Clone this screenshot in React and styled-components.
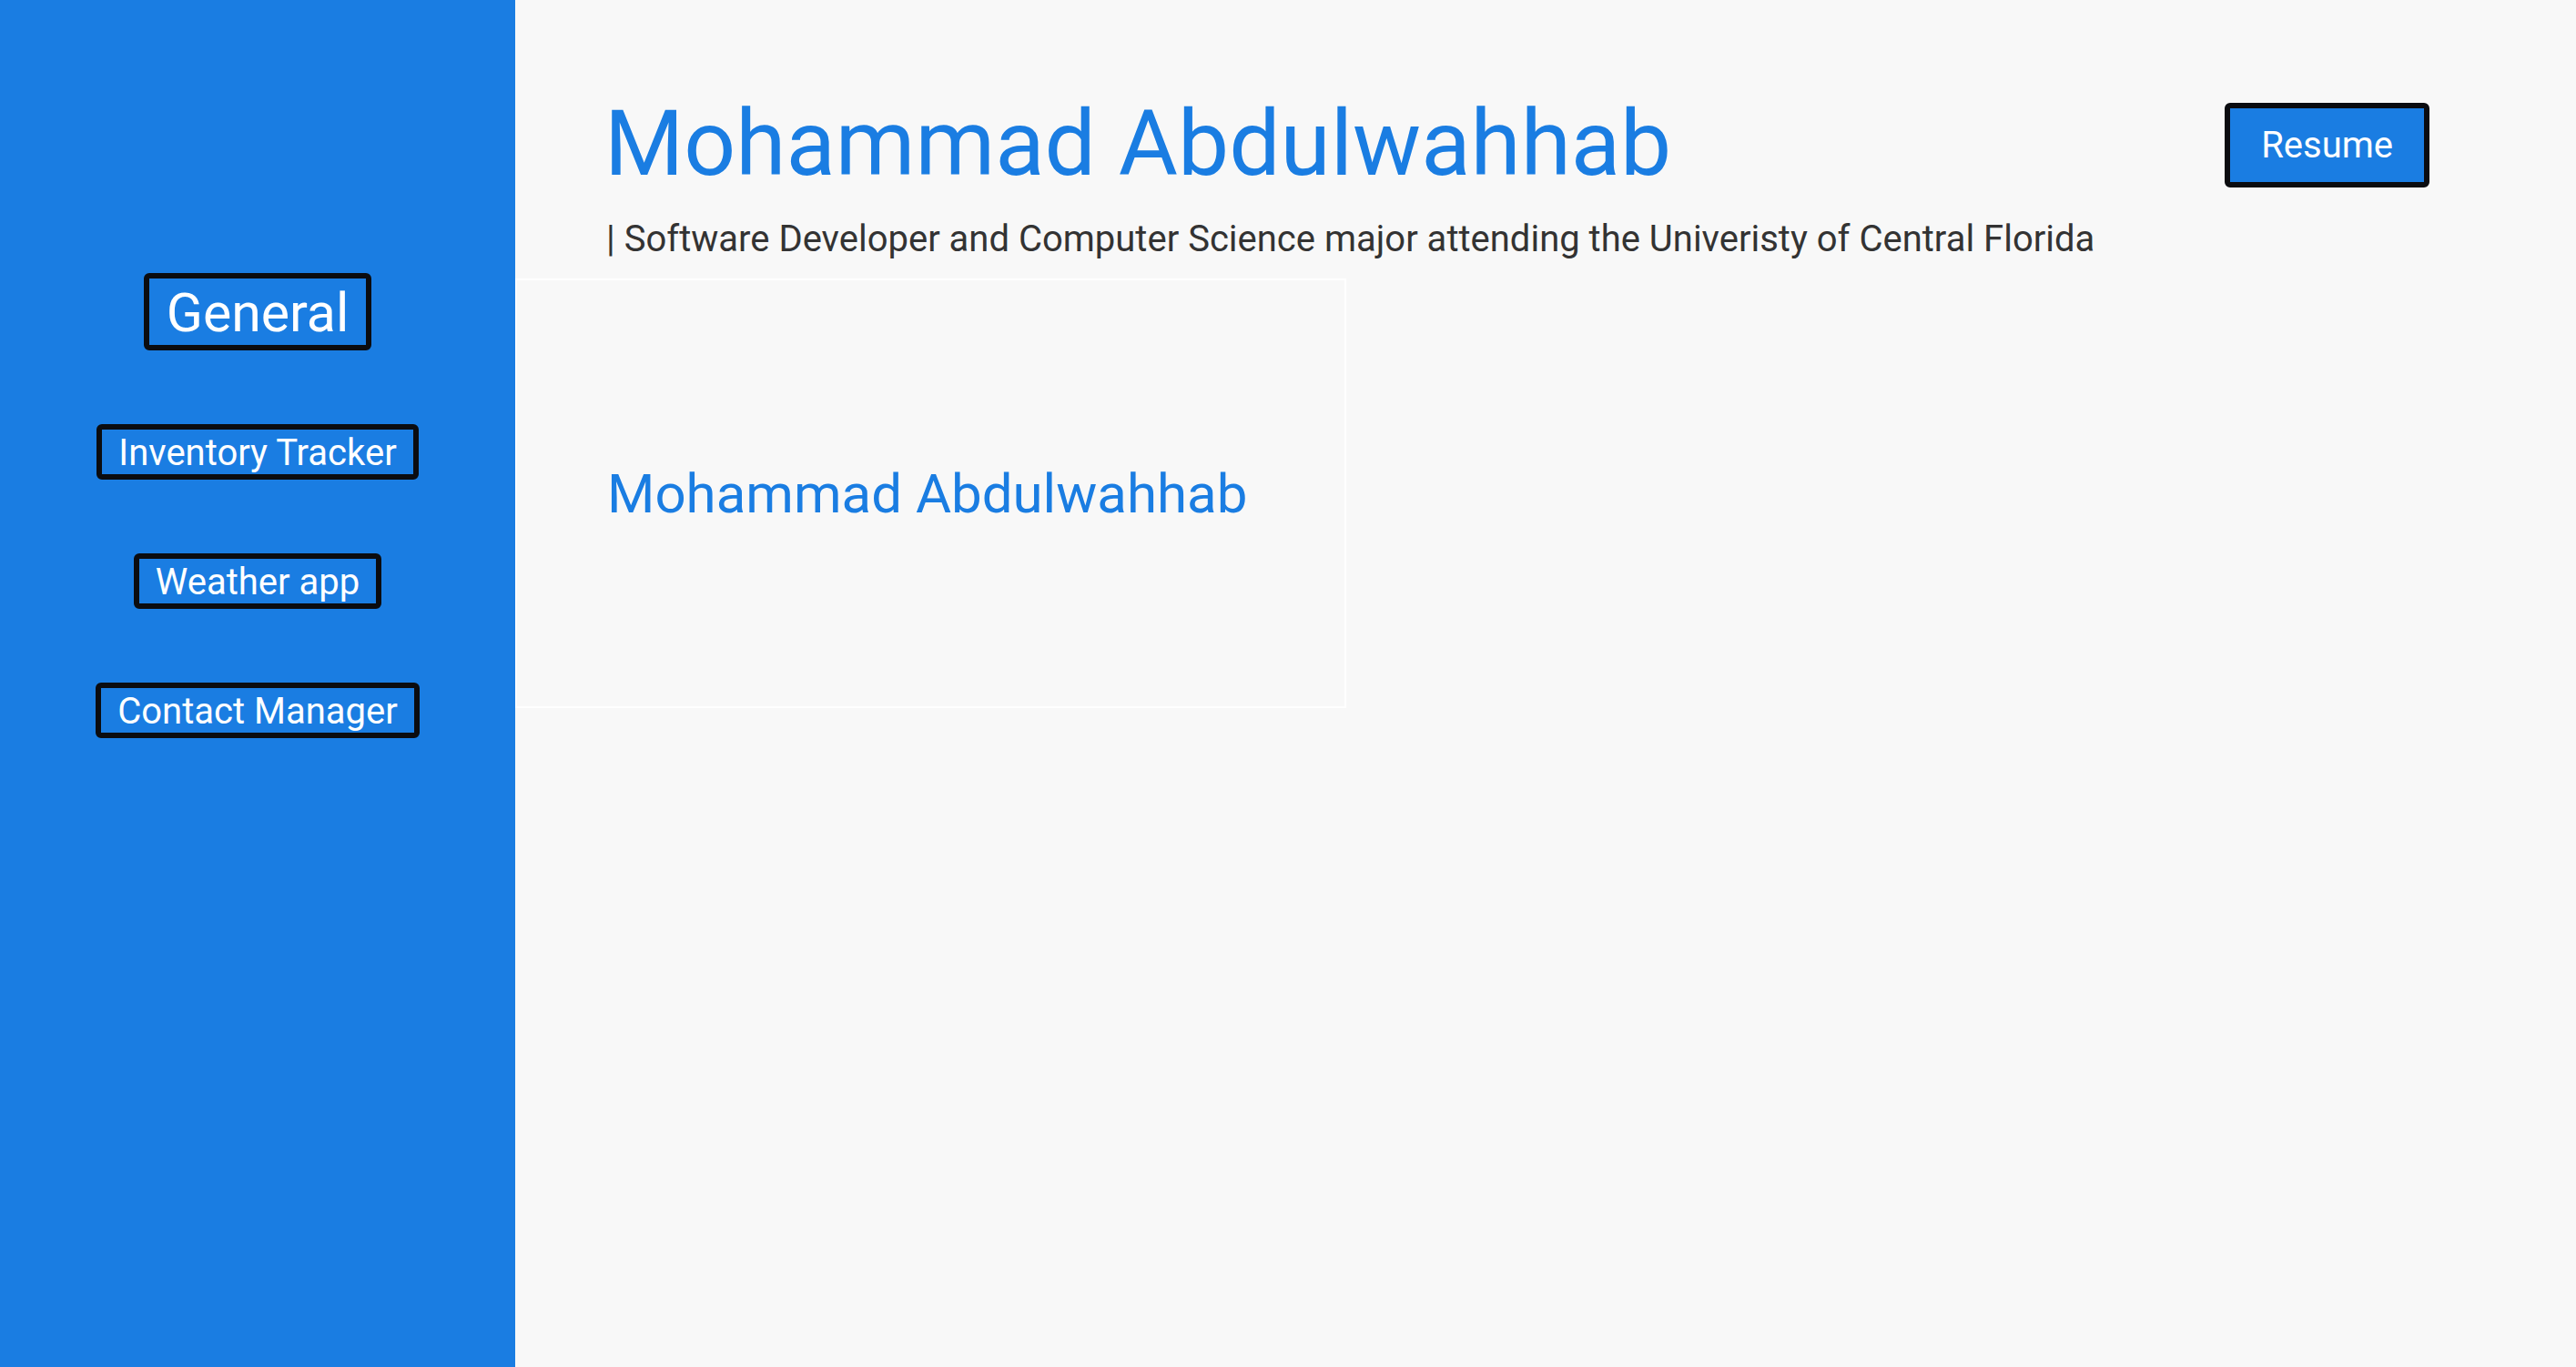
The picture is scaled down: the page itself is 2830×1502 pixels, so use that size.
import React from "react";
import styled, { createGlobalStyle } from "styled-components";

const GlobalStyle = createGlobalStyle`
  html, body {
    margin: 0;
    padding: 0;
  }
  body {
    font-family: Roboto, "Liberation Sans", Arial, sans-serif;
    background-color: #f8f8f8;
  }
`;

const BLUE = "#1a7de2";

const Page = styled.div`
  display: flex;
  min-height: 100vh;
`;

const Sidebar = styled.nav`
  width: 566px;
  flex-shrink: 0;
  background-color: ${BLUE};
  display: flex;
  flex-direction: column;
  align-items: center;
  gap: 81px;
  padding-top: 300px;
  box-sizing: border-box;
`;

const NavButton = styled.button`
  font-family: Roboto, "Liberation Sans", Arial, sans-serif;
  font-size: ${(props) => (props.$big ? "59px" : "40px")};
  line-height: normal;
  color: #fff;
  background-color: ${BLUE};
  border: 6px solid #0b0c10;
  border-radius: 6px;
  padding: ${(props) => (props.$big ? "3px 19px 1px" : "2px 18px 0")};
  cursor: pointer;
`;

const Main = styled.main`
  flex: 1;
  background-color: #f8f8f8;
`;

const Header = styled.header`
  display: flex;
  align-items: center;
  justify-content: space-between;
  padding: 99px 161px 0 98px;
`;

const Title = styled.h1`
  margin: 0;
  font-size: 100px;
  font-weight: 400;
  line-height: normal;
  color: ${BLUE};
`;

const ResumeButton = styled.button`
  font-family: Roboto, "Liberation Sans", Arial, sans-serif;
  font-size: 40px;
  line-height: normal;
  color: #fff;
  background-color: ${BLUE};
  border: 6px solid #0b0c10;
  border-radius: 6px;
  padding: 17px 34px;
  margin-top: 4px;
  cursor: pointer;
`;

const Subtitle = styled.p`
  margin: 23px 0 0 100px;
  font-size: 40px;
  line-height: normal;
  color: #333;
`;

const Card = styled.section`
  width: 913px;
  height: 472px;
  margin-top: 20px;
  box-sizing: border-box;
  border: 2px solid #fff;
  display: flex;
  align-items: center;
  padding-left: 99px;
  h2 {
    margin: 0;
    font-size: 60px;
    font-weight: 400;
    white-space: nowrap;
    color: ${BLUE};
  }
`;

const projects = ["Inventory Tracker", "Weather app", "Contact Manager"];

const App = () => {
  return (
    <Page>
      <GlobalStyle />
      <Sidebar>
        <NavButton $big>General</NavButton>
        {projects.map((name) => (
          <NavButton key={name}>{name}</NavButton>
        ))}
      </Sidebar>
      <Main>
        <Header>
          <Title>Mohammad Abdulwahhab</Title>
          <ResumeButton>Resume</ResumeButton>
        </Header>
        <Subtitle>
          | Software Developer and Computer Science major attending the
          Univeristy of Central Florida
        </Subtitle>
        <Card>
          <h2>Mohammad Abdulwahhab</h2>
        </Card>
      </Main>
    </Page>
  );
};

export default App;
